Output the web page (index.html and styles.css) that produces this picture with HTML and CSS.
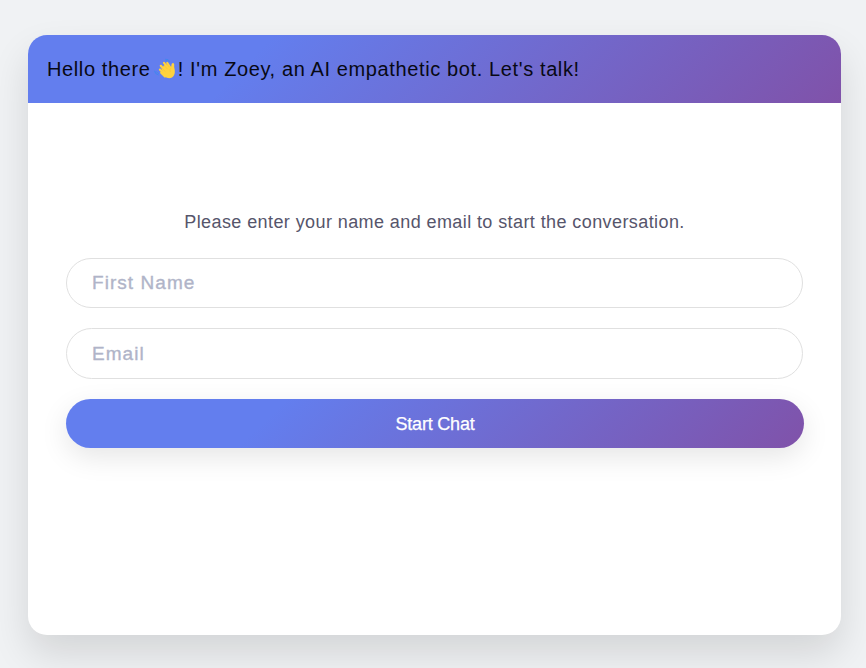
FILE: index.html
```html
<!DOCTYPE html>
<html lang="en">
<head>
<meta charset="utf-8">
<title>Zoey</title>
<link rel="stylesheet" href="styles.css">
</head>
<body>
<main class="card">
  <header class="header"><h1 class="title">Hello there <svg class="wave" viewBox="0 0 22 22" aria-hidden="true"><path d="M.6 13.2Q1 16.2 4.3 17M2.4 13.8Q3 15 4.5 15.4M11.5 1.2Q14.8 .8 15.8 3.6M12 2.6Q13.8 2.4 14.5 3.8" fill="none" stroke="#3989ef" stroke-width=".8" stroke-linecap="round"/><path d="M7.2 14.8L11 18.5M6 11.6L10.5 16M6.8 7.8L12 13.6M10 4.9L14.6 10.6M13.3 5L16.5 10" stroke="#ffd23e" stroke-width="2.2" stroke-linecap="round"/><path d="M7.5 10.5L10.5 7L13 6.5L17 9.8L17.6 6Q19.2 3.8 20.2 6.2Q19.9 9 20.8 12.5Q21.2 17 18 19.6Q14.2 21.4 10.2 18Z" fill="#ffd23e"/><path d="M7.6 9.9L11.4 13.6M9.6 7L13.5 11.1M12.2 5.4L15.4 9.3M17 9.9Q15.2 11.4 16.4 14" fill="none" stroke="#edb233" stroke-width=".35"/></svg>! I'm Zoey, an AI empathetic bot. Let's talk!</h1></header>
  <form class="form">
    <p class="intro">Please enter your name and email to start the conversation.</p>
    <input class="field" type="text" placeholder="First Name" aria-label="First Name">
    <input class="field" type="email" placeholder="Email" aria-label="Email">
    <button class="submit" type="button">Start Chat</button>
  </form>
</main>
</body>
</html>
```
FILE: styles.css
```css
* { box-sizing: border-box; }
body {
  margin: 0;
  height: 668px;
  padding: 35px 25px 33px 28px;
  overflow: hidden;
  background: #f0f2f4;
  font-family: "Liberation Sans", Arial, sans-serif;
}
.card {
  height: 600px;
  display: flex;
  flex-direction: column;
  border-radius: 19px;
  background: #fff;
  box-shadow: 0 19px 38px rgba(0, 0, 0, .12);
}
.header {
  height: 68px;
  padding: 0 19px;
  display: flex;
  align-items: center;
  border-radius: 19px 19px 0 0;
  background: linear-gradient(135deg, #637eee 28%, #8052a9 100%);
}
.title {
  margin: 0;
  font-size: 20px;
  font-weight: 400;
  line-height: 24px;
  letter-spacing: .62px;
  color: #080914;
  white-space: nowrap;
}
.wave {
  width: 22px;
  height: 22px;
  margin: -4px 2px 0 -3px;
  vertical-align: -4px;
}
.form {
  flex: 1;
  padding: 0 37px 0 38px;
  display: flex;
  flex-direction: column;
}
.intro {
  margin: 108px 1px 25px 0;
  font-size: 18px;
  line-height: 22px;
  letter-spacing: .41px;
  color: #56556b;
  text-align: center;
  white-space: nowrap;
}
.field {
  width: calc(100% - 1px);
  height: 50px;
  margin: 0 0 20px;
  padding: 0 25px;
  border: 1px solid #e0e0e0;
  border-radius: 26px;
  outline: 0;
  background: #fff;
  font: 19px "Liberation Sans", Arial, sans-serif;
  letter-spacing: 1.05px;
}
.field[type="email"] { height: 51px; }
.field::placeholder {
  color: #b0b4c8;
  opacity: 1;
  -webkit-text-stroke: .35px #b0b4c8;
}
.submit {
  width: 100%;
  height: 49px;
  padding: 1px 0 0;
  border: 0;
  border-radius: 25px;
  background: linear-gradient(135deg, #637eee 28%, #8052a9 100%);
  box-shadow: 0 9px 28px rgba(0, 0, 0, .1);
  font: 18px "Liberation Sans", Arial, sans-serif;
  letter-spacing: -.2px;
  color: #fff;
  -webkit-text-stroke: .25px #fff;
}
```
